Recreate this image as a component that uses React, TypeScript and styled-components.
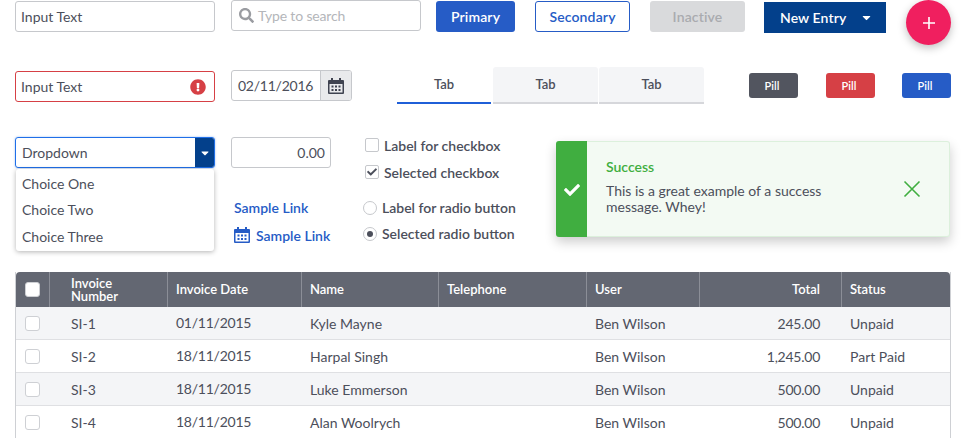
import styled, { createGlobalStyle } from 'styled-components'
import { FaSearch, FaExclamationCircle, FaCheck, FaCaretDown } from 'react-icons/fa'

const GlobalStyle = createGlobalStyle`
    html, body {
        margin: 0;
        padding: 0;
        background: #fff;
        overflow: hidden;
    }
    * {
        box-sizing: border-box;
    }
    body {
        font-family: Lato, "Open Sans", sans-serif;
        font-size: 14px;
        color: #4c4f5b;
    }
`

const Page = styled.div`
    width: 966px;
    height: 438px;
    padding: 0 15px;
    overflow: hidden;
`

const Row = styled.div<{ $height: number }>`
    display: flex;
    align-items: flex-start;
    height: ${p => p.$height}px;
`

const Field = styled.div<{ $width: number; $error?: boolean; $left?: number; $top?: number }>`
    display: flex;
    align-items: center;
    width: ${p => p.$width}px;
    height: 31px;
    margin-left: ${p => p.$left ?? 0}px;
    margin-top: ${p => p.$top ?? 0}px;
    padding: 0 5px;
    background: #fff;
    border: 1px solid ${p => (p.$error ? '#d64045' : '#c6c8cc')};
    border-radius: 3px;
    font-size: 14px;
    color: #4c4f5b;
`

const FieldText = styled.span`
    flex: 1;
`

const DateText = styled(FieldText)`
    letter-spacing: -0.25px;
`

const Placeholder = styled.span`
    margin-left: 4px;
    color: #b4b6ba;
    letter-spacing: -0.15px;
`

const NumberValue = styled.span`
    flex: 1;
    text-align: right;
`

const DateField = styled(Field)`
    padding: 0 0 0 6px;
    overflow: hidden;
`

const DateAddon = styled.div`
    display: flex;
    align-items: center;
    justify-content: center;
    width: 31px;
    height: 100%;
    background: #e9eaec;
    border-left: 1px solid #c6c8cc;
`

const Button = styled.div<{ $variant: 'primary' | 'secondary' | 'inactive'; $width: number; $left: number }>`
    display: flex;
    align-items: center;
    justify-content: center;
    width: ${p => p.$width}px;
    height: 31px;
    margin-top: 1px;
    margin-left: ${p => p.$left}px;
    border-radius: 3px;
    font-weight: 600;
    font-size: 14px;
    letter-spacing: 0.15px;
    background: ${p => (p.$variant === 'primary' ? '#265cc6' : p.$variant === 'inactive' ? '#d9dadc' : '#fff')};
    color: ${p => (p.$variant === 'primary' ? '#fff' : p.$variant === 'inactive' ? '#a9abaf' : '#265cc6')};
    border: ${p => (p.$variant === 'secondary' ? '1px solid #265cc6' : 'none')};
`

const SplitButton = styled.div`
    display: flex;
    align-items: center;
    gap: 14px;
    width: 122px;
    height: 31px;
    margin: 2px 0 0 19px;
    padding-left: 16px;
    background: #03408b;
    color: #fff;
    font-weight: 600;
    font-size: 14px;
    letter-spacing: 0.1px;
`

const Fab = styled.div`
    display: flex;
    align-items: center;
    justify-content: center;
    width: 45px;
    height: 45px;
    margin-left: 20px;
    border-radius: 50%;
    background: #f01f5f;
    box-shadow: 0 3px 8px rgba(0, 0, 0, 0.25);
`

const Tabs = styled.div`
    display: flex;
    align-items: stretch;
    height: 37px;
    margin-left: 45px;
`

const Tab = styled.div<{ $active?: boolean; $width: number; $gap: number }>`
    display: flex;
    align-items: center;
    justify-content: center;
    width: ${p => p.$width}px;
    margin-right: ${p => p.$gap}px;
    padding-bottom: 2px;
    font-size: 13px;
    font-weight: 600;
    color: #4c4f5b;
    background: ${p => (p.$active ? '#fff' : '#f4f5f7')};
    border-bottom: 2px solid ${p => (p.$active ? '#1f5fd8' : '#d6d7db')};
    border-radius: 3px 3px 0 0;
`

const Pill = styled.div<{ $color: string; $left: number }>`
    display: flex;
    align-items: center;
    justify-content: center;
    width: 49px;
    height: 25px;
    margin-top: 6px;
    margin-left: ${p => p.$left}px;
    padding-right: 3px;
    border-radius: 3px;
    background: ${p => p.$color};
    color: #fff;
    font-size: 11px;
    font-weight: 600;
`

const Section = styled.div`
    display: flex;
    align-items: flex-start;
    height: 135px;
`

const DropColumn = styled.div`
    width: 200px;
`

const Select = styled.div`
    display: flex;
    align-items: center;
    height: 31px;
    padding-left: 6px;
    border: 1px solid #1f6fe8;
    border-radius: 3px;
    overflow: hidden;
    box-shadow: 0 0 2px rgba(31, 111, 232, 0.5);
`

const SelectArrow = styled.div`
    display: flex;
    align-items: center;
    justify-content: center;
    width: 19px;
    height: 31px;
    background: #03408b;
    color: #fff;
`

const Menu = styled.ul`
    list-style: none;
    margin: 1px 1px 0;
    padding: 1.9px 0 0;
    height: 82px;
    background: #fff;
    border-radius: 3px;
    box-shadow: 0 1px 5px rgba(0, 0, 0, 0.3);
`

const MenuItem = styled.li`
    height: 26.4px;
    line-height: 26px;
    padding-left: 6px;
`

const LinkColumn = styled.div`
    display: flex;
    flex-direction: column;
    width: 100px;
    margin-left: 16px;
`

const SampleLink = styled.a`
    display: flex;
    align-items: center;
    gap: 6px;
    height: 28px;
    margin-left: 3px;
    color: #265cc6;
    font-weight: 600;
    font-size: 14px;
`

const Links = styled.div`
    margin-top: 25px;
`

const ChoiceColumn = styled.div`
    width: 192px;
    margin-left: 33px;
    font-weight: 600;
    font-size: 14px;
`

const Choice = styled.div<{ $height: number }>`
    display: flex;
    align-items: center;
    height: ${p => p.$height}px;
    white-space: nowrap;
`

const CheckBox = styled.span`
    display: flex;
    align-items: center;
    justify-content: center;
    width: 14px;
    height: 14px;
    margin-left: 1px;
    margin-right: 5px;
    border: 1px solid #c6c8cc;
    border-radius: 2px;
    background: #fff;
    color: #4c4f5b;
`

const Radio = styled.span<{ $on?: boolean }>`
    display: flex;
    align-items: center;
    justify-content: center;
    width: 14px;
    height: 14px;
    margin-left: -1px;
    margin-right: 5px;
    border: 1px solid #c6c8cc;
    border-radius: 50%;

    &::after {
        content: '';
        display: ${p => (p.$on ? 'block' : 'none')};
        width: 6px;
        height: 6px;
        border-radius: 50%;
        background: #4c4f5b;
    }
`

const Alert = styled.div`
    display: flex;
    align-items: stretch;
    width: 394px;
    height: 96px;
    margin-top: 4px;
    background: #f3faf3;
    border: 1px solid #dcf0dc;
    border-left: 0;
    border-radius: 3px;
    box-shadow: 0 5px 12px rgba(0, 0, 0, 0.2);
`

const AlertStripe = styled.div`
    display: flex;
    align-items: center;
    justify-content: center;
    flex: none;
    width: 31px;
    margin: -1px 0;
    padding-top: 2px;
    background: #40ae40;
    border-radius: 3px 0 0 3px;
    color: #fff;
`

const AlertBody = styled.div`
    flex: 1;
    padding: 17px 0 0 19px;
    font-size: 14px;
    line-height: 16px;
`

const AlertTitle = styled.div`
    color: #40ae40;
    font-weight: 600;
    margin-bottom: 8px;
`

const AlertClose = styled.div`
    display: flex;
    align-items: center;
    margin-right: 28px;
    padding-bottom: 1px;
`

const Table = styled.table`
    width: 936px;
    border-collapse: separate;
    border-spacing: 0;
    table-layout: fixed;
    margin: 0;
    border-left: 1px solid #ced0d4;
    border-right: 1px solid #ced0d4;
`

const Th = styled.th<{ $right?: boolean; $indent?: number }>`
    height: 35px;
    padding: 0 ${p => (p.$right ? 21 : 9)}px 0 ${p => p.$indent ?? 8}px;
    background: #636772;
    color: #fff;
    font-size: 13px;
    font-weight: 600;
    text-align: ${p => (p.$right ? 'right' : 'left')};
    line-height: 13px;
    border-left: 1px solid #8b8e97;

    &:first-child {
        border-left: 0;
        padding-left: 9px;
        border-top-left-radius: 4px;
    }
    &:last-child {
        border-top-right-radius: 4px;
    }
`

const Tr = styled.tr`
    &:nth-child(odd) td {
        background: #f4f5f7;
    }
`

const Td = styled.td<{ $right?: boolean; $indent?: number }>`
    height: 33px;
    padding: 0 ${p => (p.$right ? 21 : 9)}px 0 ${p => p.$indent ?? 9}px;
    font-size: 14px;
    text-align: ${p => (p.$right ? 'right' : 'left')};
    letter-spacing: ${p => (p.$right ? '-0.25px' : 'normal')};
    border-bottom: 1px solid #dfe0e3;
`

const DateCell = styled(Td)`
    padding-bottom: 2px;
    letter-spacing: -0.25px;
`

const RowCheck = styled.span`
    display: block;
    width: 15px;
    height: 15px;
    border: 1px solid #ced0d4;
    border-radius: 3px;
    background: #fff;
`

const CalendarIcon = ({ size, color }: { size: number; color: string }) => (
    <svg width={size} height={size} viewBox="0 0 16 16" fill={color}>
        <path d="M3 0h2v2h6V0h2v2h2a1 1 0 0 1 1 1v12a1 1 0 0 1-1 1H1a1 1 0 0 1-1-1V3a1 1 0 0 1 1-1h2zM1.5 6v8.5h13V6z" />
        <path d="M3.5 7.5h2v2h-2zM7 7.5h2v2H7zM10.5 7.5h2v2h-2zM3.5 11h2v2h-2zM7 11h2v2H7zM10.5 11h2v2h-2z" />
    </svg>
)

const CloseIcon = () => (
    <svg width="18" height="18" viewBox="0 0 18 18" stroke="#40ae40" strokeWidth="1.6" fill="none">
        <path d="M1.5 1.5l15 15M16.5 1.5l-15 15" />
    </svg>
)

const PlusIcon = () => (
    <svg width="12" height="12" viewBox="0 0 12 12" stroke="#fff" strokeWidth="1.6" fill="none">
        <path d="M6 0v12M0 6h12" />
    </svg>
)

const widths = [33, 118, 134, 137, 148, 113, 142, 109]

const invoices = [
    { id: 'SI-1', date: '01/11/2015', name: 'Kyle Mayne', total: '245.00', status: 'Unpaid' },
    { id: 'SI-2', date: '18/11/2015', name: 'Harpal Singh', total: '1,245.00', status: 'Part Paid' },
    { id: 'SI-3', date: '18/11/2015', name: 'Luke Emmerson', total: '500.00', status: 'Unpaid' },
    { id: 'SI-4', date: '18/11/2015', name: 'Alan Woolrych', total: '500.00', status: 'Unpaid' },
]

export default function App() {
    return (
        <Page>
            <GlobalStyle />
            <Row $height={67}>
                <Field $width={200} $top={1}>
                    <FieldText>Input Text</FieldText>
                </Field>
                <Field $width={190} $left={16}>
                    <FaSearch size={15} color="#9a9ca1" style={{ marginLeft: 2 }} />
                    <Placeholder>Type to search</Placeholder>
                </Field>
                <Button $variant="primary" $width={79} $left={15}>Primary</Button>
                <Button $variant="secondary" $width={95} $left={20}>Secondary</Button>
                <Button $variant="inactive" $width={95} $left={20}>Inactive</Button>
                <SplitButton>
                    New Entry
                    <FaCaretDown size={13} />
                </SplitButton>
                <Fab>
                    <PlusIcon />
                </Fab>
            </Row>
            <Row $height={70}>
                <Field $width={200} $top={4} $error>
                    <FieldText>Input Text</FieldText>
                    <FaExclamationCircle size={16} color="#d64045" style={{ marginRight: 3 }} />
                </Field>
                <DateField $width={121} $left={16} $top={3}>
                    <DateText>02/11/2016</DateText>
                    <DateAddon>
                        <CalendarIcon size={16} color="#3f4350" />
                    </DateAddon>
                </DateField>
                <Tabs>
                    <Tab $active $width={94} $gap={2}>Tab</Tab>
                    <Tab $width={105} $gap={1}>Tab</Tab>
                    <Tab $width={105} $gap={0}>Tab</Tab>
                </Tabs>
                <Pill $color="#52555f" $left={45}>Pill</Pill>
                <Pill $color="#d64045" $left={28}>Pill</Pill>
                <Pill $color="#265cc6" $left={27}>Pill</Pill>
            </Row>
            <Section>
                <DropColumn>
                    <Select>
                        <FieldText>Dropdown</FieldText>
                        <SelectArrow>
                            <FaCaretDown size={12} />
                        </SelectArrow>
                    </Select>
                    <Menu>
                        <MenuItem>Choice One</MenuItem>
                        <MenuItem>Choice Two</MenuItem>
                        <MenuItem>Choice Three</MenuItem>
                    </Menu>
                </DropColumn>
                <LinkColumn>
                    <Field $width={100}>
                        <NumberValue>0.00</NumberValue>
                    </Field>
                    <Links>
                        <SampleLink>Sample Link</SampleLink>
                        <SampleLink>
                            <CalendarIcon size={16} color="#265cc6" />
                            Sample Link
                        </SampleLink>
                    </Links>
                </LinkColumn>
                <ChoiceColumn>
                    <Choice $height={16}>
                        <CheckBox />
                        Label for checkbox
                    </Choice>
                    <Choice $height={38}>
                        <CheckBox>
                            <FaCheck size={10} />
                        </CheckBox>
                        Selected checkbox
                    </Choice>
                    <Choice $height={33}>
                        <Radio />
                        Label for radio button
                    </Choice>
                    <Choice $height={19}>
                        <Radio $on />
                        Selected radio button
                    </Choice>
                </ChoiceColumn>
                <Alert>
                    <AlertStripe>
                        <FaCheck size={16} />
                    </AlertStripe>
                    <AlertBody>
                        <AlertTitle>Success</AlertTitle>
                        This is a great example of a success
                        <br />
                        message. Whey!
                    </AlertBody>
                    <AlertClose>
                        <CloseIcon />
                    </AlertClose>
                </Alert>
            </Section>
            <Table>
                <colgroup>
                    {widths.map((w, i) => (
                        <col key={i} width={w} />
                    ))}
                </colgroup>
                <thead>
                    <tr>
                        <Th>
                            <RowCheck />
                        </Th>
                        <Th $indent={21}>
                            Invoice
                            <br />
                            Number
                        </Th>
                        <Th>Invoice Date</Th>
                        <Th>Name</Th>
                        <Th>Telephone</Th>
                        <Th>User</Th>
                        <Th $right>Total</Th>
                        <Th>Status</Th>
                    </tr>
                </thead>
                <tbody>
                    {invoices.map(inv => (
                        <Tr key={inv.id}>
                            <Td>
                                <RowCheck />
                            </Td>
                            <Td $indent={22}>{inv.id}</Td>
                            <DateCell>{inv.date}</DateCell>
                            <Td>{inv.name}</Td>
                            <Td />
                            <Td>Ben Wilson</Td>
                            <Td $right>{inv.total}</Td>
                            <Td>{inv.status}</Td>
                        </Tr>
                    ))}
                </tbody>
            </Table>
        </Page>
    )
}
